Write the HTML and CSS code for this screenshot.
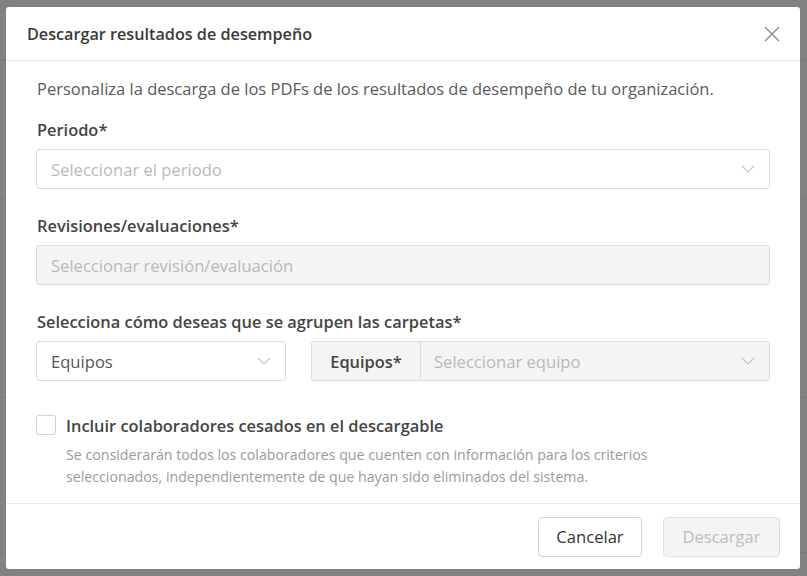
FILE: index.html
```html
<!DOCTYPE html>
<html lang="es">
<head>
<meta charset="utf-8">
<title>Descargar resultados de desempeño</title>
<link rel="stylesheet" href="styles.css">
</head>
<body>
<div class="dialog">
  <div class="dialog-header">
    <h1 class="dialog-title">Descargar resultados de desempeño</h1>
    <button class="close-btn" aria-label="Cerrar">
      <svg width="16" height="16" viewBox="0 0 16 16"><path d="M1 1L15 15M15 1L1 15" stroke="#8a8a8a" stroke-width="1.4" fill="none"/></svg>
    </button>
  </div>
  <div class="dialog-body">
    <p class="intro">Personaliza la descarga de los PDFs de los resultados de desempeño de tu organización.</p>

    <div class="field">
      <div class="label">Periodo*</div>
      <div class="select">
        <span class="placeholder">Seleccionar el periodo</span>
        <svg class="chev" width="14" height="8" viewBox="0 0 14 8"><path d="M1 1L7 7L13 1" stroke="#c4c4c4" stroke-width="1.2" fill="none"/></svg>
      </div>
    </div>

    <div class="field">
      <div class="label">Revisiones/evaluaciones*</div>
      <div class="select disabled">
        <span class="placeholder">Seleccionar revisión/evaluación</span>
      </div>
    </div>

    <div class="field">
      <div class="label">Selecciona cómo deseas que se agrupen las carpetas*</div>
      <div class="group-row">
        <div class="select small">
          <span class="value">Equipos</span>
          <svg class="chev" width="14" height="8" viewBox="0 0 14 8"><path d="M1 1L7 7L13 1" stroke="#c4c4c4" stroke-width="1.2" fill="none"/></svg>
        </div>
        <div class="input-group">
          <span class="addon">Equipos*</span>
          <div class="group-select">
            <span class="placeholder">Seleccionar equipo</span>
            <svg class="chev" width="14" height="8" viewBox="0 0 14 8"><path d="M1 1L7 7L13 1" stroke="#c4c4c4" stroke-width="1.2" fill="none"/></svg>
          </div>
        </div>
      </div>
    </div>

    <div class="check-row">
      <span class="checkbox"></span>
      <div class="check-text">
        <div class="check-label">Incluir colaboradores cesados en el descargable</div>
        <div class="check-desc">Se considerarán todos los colaboradores que cuenten con información para los criterios seleccionados, independientemente de que hayan sido eliminados del sistema.</div>
      </div>
    </div>
  </div>
  <div class="dialog-footer">
    <button class="btn btn-cancel">Cancelar</button>
    <button class="btn btn-disabled">Descargar</button>
  </div>
</div>
</body>
</html>
```

FILE: styles.css
```css
* { box-sizing: border-box; }
html, body { height: 100%; }
body {
  margin: 0;
  padding: 7px 7px 7px 6px;
  background-color: #828282;
  background-image:
    linear-gradient(#7a7a7a, #7a7a7a),
    linear-gradient(#7a7a7a, #7a7a7a),
    linear-gradient(#7a7a7a, #7a7a7a),
    linear-gradient(#7a7a7a, #7a7a7a);
  background-size: 100% 1px;
  background-repeat: no-repeat;
  background-position: 0 59px, 0 198px, 0 397px, 0 552px;
  font-family: "Open Sans", "Noto Sans", sans-serif;
  overflow: hidden;
}
.dialog {
  width: 794px;
  height: 562px;
  background: #fff;
  border-radius: 3px;
  display: flex;
  flex-direction: column;
}
.dialog-header {
  height: 54px;
  border-bottom: 1px solid #e9e9e9;
  display: flex;
  align-items: center;
  justify-content: space-between;
  padding: 0 20px 0 21px;
}
.dialog-title {
  margin: 0;
  font-size: 16.2px;
  font-weight: 600;
  color: #3a3a3a;
  padding-top: 1px;
}
.close-btn {
  border: 0;
  background: none;
  padding: 0;
  width: 16px;
  height: 16px;
  display: flex;
}
.dialog-body {
  flex: 1;
  padding: 16px 30px 0 30px;
}
.intro {
  margin: 0 0 0 1px;
  font-size: 16.5px;
  line-height: 24px;
  color: #5a5a5a;
}
.field { margin-top: 18px; }
.field + .field { margin-top: 26px; }
.label {
  font-size: 16.4px;
  line-height: 22px;
  font-weight: 600;
  color: #444;
  margin-bottom: 8px;
  padding-left: 1px;
}
.select {
  height: 40px;
  border: 1px solid #dcdcdc;
  border-radius: 3px;
  display: flex;
  align-items: center;
  justify-content: space-between;
  padding: 0 14px 0 14px;
  font-size: 16.6px;
}
.select.disabled { background: #f4f4f4; }
.placeholder { color: #b9b9b9; }
.value { color: #555; }
.chev { flex: none; }
.group-row {
  display: flex;
  gap: 25px;
}
.select.small { width: 250px; flex: none; }
.input-group {
  flex: 1;
  height: 40px;
  display: flex;
  border: 1px solid #dcdcdc;
  border-radius: 3px;
  background: #f4f4f4;
}
.addon {
  width: 109px;
  border-right: 1px solid #dcdcdc;
  display: flex;
  align-items: center;
  justify-content: center;
  font-size: 16.4px;
  font-weight: 600;
  color: #444;
}
.group-select {
  flex: 1;
  display: flex;
  align-items: center;
  justify-content: space-between;
  padding: 0 14px 0 13px;
  font-size: 16.6px;
}
.check-row {
  display: flex;
  gap: 10px;
  margin-top: 34px;
}
.checkbox {
  width: 20px;
  height: 20px;
  border: 1px solid #d4d4d4;
  border-radius: 2px;
  flex: none;
  margin-top: 0;
}
.check-label {
  font-size: 16.4px;
  line-height: 22px;
  font-weight: 600;
  color: #444;
}
.check-desc {
  margin-top: 7px;
  font-size: 14.2px;
  line-height: 22px;
  color: #9a9a9a;
  max-width: 610px;
}
.dialog-footer {
  height: 66px;
  border-top: 1px solid #ececec;
  display: flex;
  justify-content: flex-end;
  align-items: center;
  gap: 21px;
  padding: 0 20px 0 0;
}
.btn {
  height: 40px;
  padding: 0;
  border: 1px solid #d4d4d4;
  border-radius: 4px;
  background: #fff;
  font-family: inherit;
  font-size: 16.6px;
  color: #333;
}
.btn-cancel { width: 104px; }
.btn-disabled {
  width: 117px;
  background: #f4f4f4;
  color: #bdbdbd;
  border-color: #e0e0e0;
}
```
